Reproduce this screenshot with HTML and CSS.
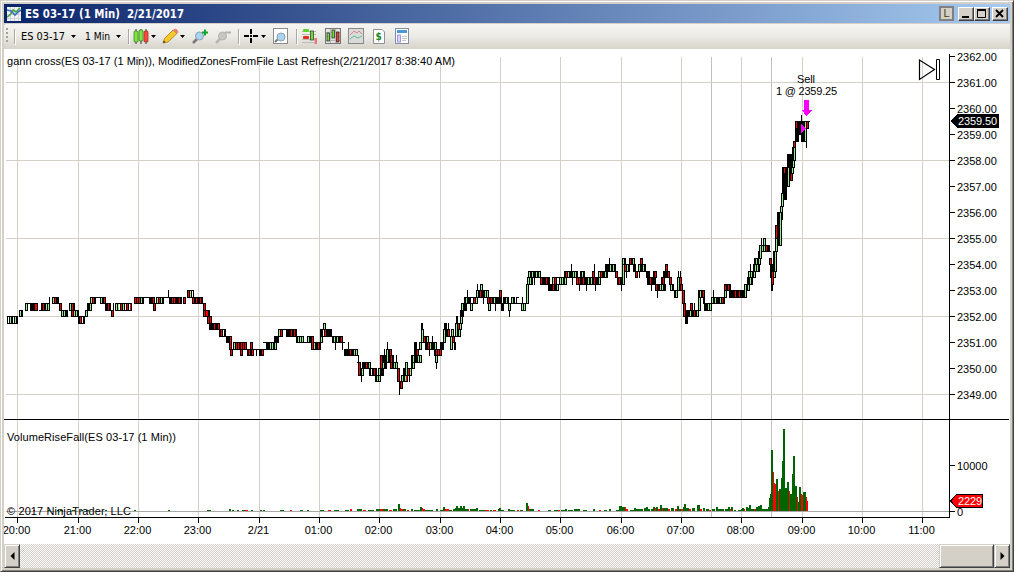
FILE: index.html
```html
<!DOCTYPE html>
<html lang="en">
<head>
    <meta charset="UTF-8">
    <title>ES 03-17 (1 Min) 2/21/2017</title>
    <link rel="stylesheet" href="styles.css">
</head>
<body>
<div class="window">
    <div class="titlebar">
        <svg class="app-icon" width="14" height="14" viewBox="0 0 14 14">
            <rect width="14" height="14" fill="#f0f2f4"/>
            <path d="M0 3.5H14M0 7.5H14M0 11.5H14M3.5 0V14M7.5 0V14M11.5 0V14" stroke="#ccd4dc"/>
            <path d="M0 10L3 8L6 3L9 5L13 1" fill="none" stroke="#4aa545" stroke-width="1.6"/>
            <path d="M0 3L4 4L8 8L11 5L14 3" fill="none" stroke="#3a6fb5" stroke-width="1.6"/>
        </svg>
        <svg class="title" width="200" height="19"><text x="0" y="14" textLength="159" lengthAdjust="spacingAndGlyphs">ES 03-17 (1 Min)&#160; 2/21/2017</text></svg>
        <div class="buttons">
            <span class="link-button">L</span>
            <span class="win-button"><svg width="12" height="11"><path d="M2 9H9" stroke="#000" stroke-width="2"/></svg></span>
            <span class="win-button"><svg width="12" height="11"><path d="M1.5 1V9.5H9.5V1" fill="none" stroke="#000"/><path d="M1 2H10" stroke="#000" stroke-width="2"/></svg></span>
            <span class="win-button close"><svg width="12" height="11"><path d="M2 2L9 9M9 2L2 9" stroke="#000" stroke-width="1.9"/></svg></span>
        </div>
    </div>

    <div class="toolbar">
        <svg width="1004" height="25" viewBox="4 24 1004 25">
            <g fill="#a5a297"><rect x="6" y="28" width="2" height="2"/><rect x="6" y="32" width="2" height="2"/><rect x="6" y="36" width="2" height="2"/><rect x="6" y="40" width="2" height="2"/></g>
            <path d="M14.5 29V44M128.5 29V44M238.5 29V44M296.5 29V44" stroke="#aaa79d"/>
            <path d="M15.5 30V45M129.5 30V45M239.5 30V45M297.5 30V45" stroke="#fff"/>
            <text x="21" y="40" textLength="44" lengthAdjust="spacingAndGlyphs">ES 03-17</text>
            <text x="85" y="40" textLength="25" lengthAdjust="spacingAndGlyphs">1 Min</text>
            <path d="M71 35h5l-2.5 3zM116 35h5l-2.5 3zM151 35h5l-2.5 3zM180 35h5l-2.5 3zM261 35h5l-2.5 3z" fill="#000"/>
            <!-- candle style -->
            <path d="M136 29V44M141 29V44M146 29V44" stroke="#333"/>
            <g stroke="#3c6e28" stroke-width=".7"><rect x="134" y="31" width="4" height="11" rx="1" fill="#7be83c"/><rect x="139" y="30" width="4" height="11" rx="1" fill="#7be83c"/><rect x="144" y="31" width="4" height="11" rx="1" fill="#fa4a3c" stroke="#8c2a22"/></g>
            <!-- pencil -->
            <path d="M163 43L164.500 38.500L173 30L177 33.500L168 42Z" fill="#f6c928" stroke="#a67720" stroke-width=".8"/>
            <path d="M173 30Q175.500 27.500 177.500 30T177 33.500Z" fill="#e8847a"/>
            <path d="M163 43L164 40.500L165.500 42.200Z" fill="#333"/>
            <!-- zoom in / out -->
            <path d="M193 43L197 39" stroke="#777" stroke-width="2.500"/>
            <circle cx="199.500" cy="36" r="4" fill="#a9d3ee" stroke="#8ca4b4"/>
            <path d="M202 32.500H208M205 29.500V35.500" stroke="#12a52b" stroke-width="2"/>
            <path d="M216 43L220 39" stroke="#b8b6b1" stroke-width="2.500"/>
            <circle cx="222.500" cy="36" r="4" fill="#c7c6c3" stroke="#b5b3ae"/>
            <path d="M225 32.500H231" stroke="#b5b3ae" stroke-width="2"/>
            <!-- crosshair -->
            <path d="M244 36H249M253 36H258M251 29V34M251 38V43" stroke="#000" stroke-width="2"/><rect x="250" y="35" width="2" height="2"/>
            <!-- data box -->
            <rect x="273.500" y="28.500" width="14" height="15" fill="#fff" stroke="#8c8c8c"/>
            <path d="M275 42L278 39" stroke="#777" stroke-width="2"/><circle cx="281" cy="37" r="4" fill="#a9d3ee" stroke="#8ca4b4"/>
            <!-- chart trader -->
            <path d="M302 31.500H316M302 34.500H316M302 39.500H316M302 42.500H314" stroke="#bbb"/>
            <rect x="303" y="29" width="6" height="3" rx="1" fill="#5bd52b"/><rect x="303" y="36" width="6" height="3" rx="1" fill="#e33022"/>
            <rect x="310.500" y="31" width="3" height="9" fill="#6fdc35" stroke="#333" stroke-width=".7"/><rect x="314.500" y="38" width="2.500" height="6" fill="#e77a78"/>
            <!-- data series -->
            <rect x="325.500" y="28.500" width="15" height="15" fill="#e4e4e2" stroke="#777"/>
            <path d="M326 32.500H340M326 36.500H340M326 40.500H340M330.500 29V43M335.500 29V43" stroke="#b5b5b5"/>
            <g stroke="#222" stroke-width=".7"><rect x="327" y="33" width="2.500" height="8" fill="#6fdc35"/><rect x="332" y="30" width="2.500" height="8" fill="#6fdc35"/><rect x="336.500" y="32" width="2.500" height="10" fill="#f03c2c"/></g>
            <!-- indicators -->
            <rect x="348.500" y="28.500" width="15" height="15" fill="#d8dadb" stroke="#888"/>
            <path d="M350 35L354 31L357 33L359 31L362 34" fill="none" stroke="#e58080"/><path d="M350 39L354 36L358 38L362 36" fill="none" stroke="#5cbf86"/>
            <!-- strategies -->
            <path d="M373.500 29.500H382L384.500 32V43.500H373.500Z" fill="#fff" stroke="#909090"/><text class="dollar" x="375.500" y="40">$</text>
            <!-- properties -->
            <rect x="395.500" y="28.500" width="13" height="15" fill="#fff" stroke="#8090a0"/><rect x="397" y="30" width="10" height="3" fill="#4a98d8"/><rect x="397.500" y="35" width="3" height="7" fill="#ddd3ff" stroke="#a294e8"/><path d="M402 36.500H407M402 38.500H407M402 40.500H406" stroke="#c4c4cc"/>
        </svg>
    </div>

    <svg id="chart" class="chart" width="1006" height="495" viewBox="4 49 1006 495" shape-rendering="crispEdges">
        <g id="grid"></g>
        <g id="volume"></g>
        <g id="candles"></g>
        <g id="axes"></g>
        <text x="7" y="65" textLength="448">gann cross(ES 03-17 (1 Min)), ModifiedZonesFromFile Last Refresh(2/21/2017 8:38:40 AM)</text>
        <text x="7" y="441" textLength="169">VolumeRiseFall(ES 03-17 (1 Min))</text>
        <text x="7" y="515" textLength="124">© 2017 NinjaTrader, LLC</text>
        <text x="797" y="83" textLength="18">Sell</text>
        <text x="776" y="95" textLength="61">1 @ 2359.25</text>
        <path d="M804 100h5v10h3l-5.500 6l-5 -6h2.500z" fill="#f0f"/>
        <path d="M801 124l5 4.500l-5 4.500z" fill="#f0f"/>
        <g fill="#fff" stroke="#000" shape-rendering="auto"><path d="M919.500 60V79.500L934.500 69.500Z" fill="none" stroke-width="1.200"/><path d="M936.500 59.500H939.500V79.500H936.500Z"/></g>
        <path d="M950 121l7 -7h42v14h-42z" fill="#000"/>
        <text class="light" x="958" y="125" textLength="39">2359.50</text>
        <path d="M950.500 501l6 -6.500h26v13h-26z" fill="#f00" stroke="#000"/>
        <text class="light" x="958" y="505" textLength="24">2229</text>
    </svg>

    <div class="scrollbar">
        <span class="scroll-button"><svg width="5" height="8"><path d="M4.500 0V8L.5 4Z"/></svg></span>
        <span class="track"></span>
        <span class="thumb"></span>
        <span class="scroll-button"><svg width="5" height="8"><path d="M.5 0V8L4.500 4Z"/></svg></span>
    </div>
</div>

<script>
    const NS = 'http://www.w3.org/2000/svg';
    const colors = { k: '#000', g: '#90ee90', r: '#f00', w: '#fff' };

    function rect(parent, x, y, w, h, fill) {
        const r = document.createElementNS(NS, 'rect');
        r.setAttribute('x', x);
        r.setAttribute('y', y);
        r.setAttribute('width', w);
        r.setAttribute('height', h);
        r.setAttribute('fill', fill);
        parent.appendChild(r);
    }

    function label(parent, x, y, text, anchor) {
        const t = document.createElementNS(NS, 'text');
        t.setAttribute('x', x);
        t.setAttribute('y', y);
        if (anchor) t.setAttribute('text-anchor', anchor);
        t.textContent = text;
        parent.appendChild(t);
    }

    // one level is a 0.25 tick, level 0 is 2352.00
    function levelY(n) {
        return 316 - Math.floor(n * 6.5);
    }

    const grid = document.getElementById('grid');
    const axes = document.getElementById('axes');
    const candles = document.getElementById('candles');
    const volume = document.getElementById('volume');

    // grid and axes
    const hours = [[17, '20:00'], [78, '21:00'], [138, '22:00'], [198, '23:00'], [259, '2/21'], [319, '01:00'], [379, '02:00'], [440, '03:00'],
        [500, '04:00'], [560, '05:00'], [621, '06:00'], [681, '07:00'], [741, '08:00'], [802, '09:00'], [862, '10:00'], [922, '11:00']];
    hours.forEach(([x, text]) => {
        rect(grid, x, 57, 1, 460, '#d4d0c8');
        rect(axes, x, 518, 1, 5, '#000');
        label(axes, x - 0.5, 534, text, 'middle');
    });
    rect(grid, 711, 57, 1, 460, '#c0c0c0');
    rect(grid, 771, 57, 1, 460, '#c0c0c0');
    [82, 160, 238, 316, 394].forEach(y => rect(grid, 6, y, 943, 1, '#d4d0c8'));
    rect(grid, 6, 511, 943, 1, '#a9a9a9');
    for (let p = 2349; p <= 2362; p++) {
        const y = 316 - (p - 2352) * 26;
        rect(axes, 950, y, 5, 1, '#000');
        label(axes, 957, y + 5, p + '.00');
    }
    rect(axes, 949, 54, 1, 464, '#000');
    rect(axes, 5, 517, 945, 1, '#000');
    rect(axes, 4, 419, 1005, 1, '#000');
    rect(axes, 950, 465, 5, 1, '#000');
    rect(axes, 950, 511, 5, 1, '#000');
    label(axes, 957, 470, '10000');
    label(axes, 957, 516, '0');

    // x, top level, bottom level, one letter per pixel column
    const bars = `7,0,-1,kwkgkkwkgkk 19,1,0,kgkk 25,2,1,kgk 28,2,2,kkk 30,2,1,kkkkkrrk 39,1,1,kkk 41,2,1,kkrkkgkgk 49,3,2,k 52,3,2,kgkrkkk
        59,2,1,krk 61,1,0,kgkgkkk 69,2,1,kgkrkk 71,1,0,krkgkgkk 78,0,-1,kkrkwkk 85,1,0,kgk 87,2,1,kkkgk 90,3,2,kgkrkk 96,3,3,kkkk 100,3,2,kgkkrk
        105,2,1,kkkrkk 111,1,0,krk 113,2,1,k 115,2,1,kgkgwkrkgkwkrkwrk 134,3,2,krkrkrkgkk 144,3,3,kkkkkk 149,3,2,kkkkrk 153,2,1,krk 156,3,2,kgkrkgkk
        164,3,3,kkkkkk 168,4,3,k 169,3,2,kkkrkrk 176,3,2,kkkrkk 183,3,2,krk 187,4,3,krkgkwk 192,3,2,krkkrkkkrkk 203,2,1,krk 203,1,0,krkrrkk
        207,0,-1,krkrk 209,-1,-2,kkkkkrkkkrk 219,-2,-3,kkrkwkk 226,-3,-4,kkkk 229,-3,-5,krk 230,-5,-6,krk 233,-4,-5,kgkrkrkkrkrkrk 240,-5,-6,krk
        250,-4,-5,krk 247,-5,-6,kkrkkrk 253,-5,-5,kkkkkk 256,-5,-6,k 259,-5,-6,kkkrk 263,-5,-5,kkkkkk 263,-4,-4,kkkk 266,-4,-5,kkkkgkgkkk
        274,-3,-5,kgk 275,-3,-4,kkkk 278,-2,-3,kgkrk 282,-2,-2,kkkk 286,-2,-3,kkkkkrkkrkk 296,-3,-4,kkgkgkgk 303,-4,-4,kkkkkk 307,-3,-4,kgkkkk
        311,-3,-5,krk 313,-4,-5,kgkkkrkk 320,-2,-4,kgk 323,-1,-2,kgk 320,-2,-3,kkkwkrkkkkkk 332,-3,-4,kkgkkgkkkrk 335,-4,-5,k 342,-4,-4,kkk 342,-4,-5,k
        344,-5,-6,kkkkkkrkkkgkgk 348,-4,-5,k 358,-6,-7,k 357,-7,-7,kk 358,-7,-9,krk 361,-8,-10,k 361,-8,-9,kgk 362,-7,-8,kkkkrkkgk 369,-8,-9,kkwkkrkk
        375,-9,-10,kkgkgk 378,-8,-9,kgkkkk 380,-6,-8,krk 384,-5,-6,k 382,-6,-7,kkkkkk 382,-7,-8,kgkkk 387,-4,-5,k 386,-5,-7,kgk 388,-5,-6,kkrk 389,-6,-7,kkrkk
        390,-7,-8,krkkgkgk 396,-6,-7,k 397,-8,-10,krk 399,-8,-12,k 400,-10,-11,krk 401,-9,-10,kgkkgrk 403,-8,-9,kkkk 405,-7,-9,kgk 407,-8,-9,krkgk
        409,-9,-10,k 411,-6,-8,kkgk 414,-4,-6,kkk 412,-6,-7,kgkkkkgkgk 415,-5,-6,kkrk 419,-4,-5,kgk 421,-2,-4,kgk 421,-1,-2,kk 423,-3,-4,krkkgk
        425,-4,-5,kkkrkgkkkkgk 432,-3,-4,k 429,-5,-6,k 434,-5,-6,kkrkrkrk 435,-6,-7,kgk 436,-7,-8,k 440,-4,-5,kkkk 443,-2,-4,kgk 444,-1,-2,kkk
        446,-2,-3,kkrk 448,-1,-2,k 450,-3,-5,kgk 451,-2,-3,kgk 452,-3,-4,krk 454,-4,-5,kk 455,-1,-3,kgk 456,0,-1,kk 457,-1,-2,krk 458,-2,-3,kgk 459,-1,-2,kgk
        460,1,-1,kgk 461,2,1,kgkkkk 461,1,0,kkk 464,3,2,kkgkkkk 467,4,3,k 470,2,1,kgk 470,3,3,kkkkk 473,3,2,krkgk 476,4,3,kgk 477,5,4,k 480,5,4,kgk 478,4,3,kkrkkkkgkgk
        487,3,2,krkkrk 488,2,1,kgk 483,3,2,k 493,3,2,kgkkkkkkk 495,2,1,k 499,4,3,krk 501,2,1,kkk 503,3,2,kkkgkk 508,2,1,kgk 509,1,0,k 511,3,2,kgkk
        516,3,2,k 516,3,3,kkk 512,2,2,kkkkkkkkkkkk 521,2,1,kgkgk 522,3,2,k 526,5,2,kgk 527,6,5,kgkgkk 528,7,6,kgkkgkkkgkkgk 534,6,5,k
        540,6,5,krkkkkrkkk 548,5,4,kkkkkrkkkgk 552,6,5,kgkrk 557,6,6,kkk 559,6,5,kgkgkkgk 564,7,6,kkrk 567,7,6,kgkkkkgkgkk 571,8,7,k 572,6,5,k
        576,6,5,krkrkkkrkk 580,7,6,kkgkk 579,5,4,k 586,5,4,k 585,6,5,kkkgkkgkkrkkkk 592,7,6,krk 594,8,7,k 595,5,4,k 598,7,6,kgkrkkkgkk 598,6,5,kgk
        605,8,7,kkkkkgkkgkk 609,9,8,k 615,7,6,krk 617,6,5,kkrkk 621,5,4,k 622,8,5,kgk 622,9,8,kgkk 624,8,7,krkgkk 626,7,6,k 629,9,8,krkkgk
        628,8,8,kkkkkk 633,8,7,kkk 635,7,6,krk 638,8,7,kgkkkgkk 640,9,8,krk 639,7,6,k 645,8,7,k 646,7,6,kkkk 647,6,5,kkkrkkkkk 653,7,6,kkrk
        655,5,4,krkkkgkgkkk 657,4,3,k 651,5,4,k 661,6,5,kkrk 663,7,6,kkk 665,8,7,krk 666,7,6,kkrk 669,6,5,krk 670,5,4,kgkk 674,4,3,kkgk
        677,6,4,kgk 679,6,5,krk 680,5,4,krk 678,7,6,k 680,7,6,k 682,4,2,krk 683,2,0,krk 685,1,0,kkkkkgkkkrkkgk 685,0,-1,kkk 690,2,1,krk 694,2,1,k
        698,3,1,kgk 698,4,3,kkgkrk 702,4,3,krk 703,3,2,kk 704,2,1,kkkkgkgk 711,3,2,kgkkgkkkkgkrkk 713,4,3,k 724,5,3,kgk 724,5,4,krkkrkk
        729,4,3,kkkkkkrkkkrkkkkgk 744,5,3,kgk 746,5,4,kkgk 747,6,5,kkkgkk 748,7,6,kgkgkk 750,8,7,k 753,8,6,kgk 754,8,7,kgkgkk 754,9,8,kkgkk
        758,10,8,kgk 759,11,9,kgk 761,11,10,kgkgkrkkk 761,12,11,k 763,12,11,kgk 767,10,10,kkkk 769,9,8,krk 770,8,6,kkk 771,6,4,kk 771,7,5,krk
        773,8,6,kgk 773,10,7,kkgk 775,12,10,kgk 775,14,12,krk 777,14,11,kkgk 777,16,13,kkkk 780,17,15,kgk 779,16,11,kgk 781,19,17,kgk 782,21,19,kkkk 782,23,21,kkrk
        784,22,18,kkk 786,18,18,k 785,23,20,kkk 787,23,20,kgk 787,25,23,kkrk 789,25,22,kkk 790,22,21,krk 791,24,22,kgk 792,26,23,kgk 793,27,24,kgk
        793,27,26,krk 795,30,27,kkkk 795,30,29,krk 797,30,28,kkkkk 798,29,28,krk 801,31,27,k 799,30,28,kkkkk 801,30,27,kkkk 803,29,27,kkk 804,30,27,kgk
        806,30,29,krk 805,30,30,kkkkk 806,27,26,k`;
    bars.trim().split(/\s+/).forEach(bar => {
        const [x, top, bottom, columns] = bar.split(',');
        const y = levelY(+top);
        const h = levelY(+bottom) - y + 1;
        rect(candles, +x, y, columns.length, h, '#000');
        [...columns].forEach((c, i) => {
            if (c !== 'k' && h > 2) rect(candles, +x + i, y + 1, 1, h - 2, colors[c]);
        });
    });

    // volume: x, width, height, g or r
    const volumes = `33,2,1,r 48,2,1,g 57,2,1,g 60,3,1,g 72,3,1,g 81,2,1,g 86,3,1,g 105,2,1,g 134,2,1,g 168,2,1,g 207,4,1,g 229,2,2,g 232,2,1,g 237,2,1,g 242,3,1,g
        245,3,1,r 251,2,1,g 260,2,1,g 263,2,1,g 280,4,1,g 290,2,1,r 300,3,1,g 307,2,1,g 320,4,1,g 328,3,1,r 334,5,1,g 345,4,1,g 350,2,2,r 357,5,2,g 363,3,1,r 368,6,1,g
        376,4,2,g 380,3,2,r 383,5,2,g 389,3,1,r 393,4,2,g 398,2,7,g 400,1,3,r 401,2,2,r 403,3,2,g 407,2,1,r 411,2,2,g 414,6,1,g 420,2,4,g 422,1,3,r 423,2,2,r 425,8,1,g
        436,2,2,g 440,3,1,g 443,2,4,g 445,4,2,r 449,3,1,g 453,3,2,g 455,2,3,g 456,2,5,g 458,2,3,g 460,2,5,g 462,2,3,g 463,2,5,g 465,3,2,g 468,1,2,r 470,6,2,g 476,2,3,g
        479,6,1,g 485,4,1,r 490,2,1,g 493,3,1,r 498,1,2,g 499,2,3,g 501,3,1,g 508,2,2,g 510,5,1,g 517,2,1,r 520,3,1,g 526,2,8,g 528,1,5,r 529,3,2,g 532,2,2,g 538,2,1,r
        548,3,1,g 554,5,1,g 558,2,1,r 561,4,1,g 565,2,2,g 568,5,1,g 574,6,2,g 583,4,1,g 593,2,2,g 599,2,1,r 604,3,1,g 609,2,2,g 616,3,1,g 619,2,5,g 621,1,5,g 622,3,4,g 625,1,4,r
        626,2,2,r 630,4,1,g 634,2,3,g 636,4,2,g 640,3,2,g 644,2,3,g 646,2,4,g 648,2,2,g 651,2,2,g 653,2,4,g 655,1,3,r 656,2,4,g 658,2,2,r 660,2,6,g 662,1,3,r 663,5,3,g
        668,2,2,r 671,3,3,g 675,2,2,r 677,2,5,g 679,2,2,g 681,2,2,r 683,1,4,g 684,2,7,g 686,3,3,g 689,2,2,r 692,3,3,g 697,3,6,g 700,2,2,r 703,2,3,g 706,3,2,g 709,2,1,r
        712,3,2,g 716,2,4,g 718,2,2,g 720,4,2,g 725,3,2,g 728,2,4,g 730,1,2,r 731,2,4,g 734,2,1,g 738,3,1,g 741,1,2,g 742,2,3,g 744,1,2,r 746,2,4,g 748,1,3,g 749,2,6,g
        751,3,2,g 754,1,2,r 755,1,2,g 756,2,4,g 758,2,5,g 760,2,6,g 762,6,2,g 768,1,4,g 769,1,13,g 770,1,17,g 771,2,61,g 773,1,39,r 774,1,28,r 775,1,27,r 776,2,32,g 778,1,20,r
        779,2,22,g 781,1,33,g 782,1,50,g 783,2,82,g 785,2,23,g 787,2,29,g 789,1,20,r 790,2,17,g 792,1,37,g 793,2,55,g 795,2,25,g 797,1,14,r 798,1,9,g 799,2,24,g 801,1,17,r
        802,1,16,r 803,3,19,g 806,1,14,r 807,1,10,r`;
    volumes.trim().split(/\s+/).forEach(v => {
        const [x, w, h, c] = v.split(',');
        rect(volume, +x, 511 - h, +w, +h, c === 'g' ? '#006400' : '#f00');
    });
</script>
</body>
</html>
```
FILE: styles.css
```css
body {
    margin: 0;
    overflow: hidden;
    font-family: "Liberation Sans", Arial, sans-serif;
    font-size: 11px;
}
.window {
    display: flex;
    flex-direction: column;
    box-sizing: border-box;
    width: 1014px;
    height: 572px;
    padding: 3px;
    border: 1px solid #d4d0c8;
    border-right-color: #404040;
    border-bottom-color: #404040;
    background: #d4d0c8;
    box-shadow: inset 1px 1px #fff, inset -1px -1px #808080;
}
.titlebar {
    display: flex;
    align-items: center;
    height: 19px;
    flex: none;
    padding-left: 3px;
    padding-right: 2px;
    background: linear-gradient(to right, #0a246a, #a6caf0);
}
.title {
    margin-left: 4px;
    overflow: visible;
}
.title text {
    font-family: "DejaVu Sans Condensed", "DejaVu Sans", sans-serif;
    font-size: 11.5px;
    font-weight: bold;
    fill: #fff;
}
.buttons {
    display: flex;
    align-items: center;
    margin-left: auto;
}
.link-button {
    box-sizing: border-box;
    width: 15px;
    height: 15px;
    margin-right: 4px;
    border: 2px solid #808080;
    background: #d4d0c8;
    color: #4a3c14;
    line-height: 11px;
    text-align: center;
}
.win-button {
    display: flex;
    align-items: center;
    justify-content: center;
    box-sizing: border-box;
    width: 16px;
    height: 14px;
    border: 1px solid #fff;
    border-right-color: #404040;
    border-bottom-color: #404040;
    background: #d4d0c8;
    box-shadow: inset -1px -1px #808080;
}
.close {
    margin-left: 2px;
}
.toolbar {
    flex: none;
    height: 25px;
    margin-top: 1px;
    border-radius: 3px 0 2px 3px;
    background: linear-gradient(#f6f5f2, #ebeae5 50%, #d6d3ca);
}
.toolbar svg {
    display: block;
}
.toolbar text {
    font-family: "DejaVu Sans Condensed", "DejaVu Sans", sans-serif;
    font-size: 11px;
}
.toolbar .dollar {
    fill: #238b2b;
    font-size: 10px;
    font-weight: bold;
}
.chart {
    display: block;
    flex: none;
    background: #fff;
}
.chart text {
    font-size: 11px;
}
.chart .light {
    fill: #fff;
}
.scrollbar {
    display: flex;
    flex: none;
    height: 24px;
}
.scroll-button,
.thumb {
    display: flex;
    align-items: center;
    justify-content: center;
    box-sizing: border-box;
    width: 16px;
    border: 1px solid #d4d0c8;
    border-right-color: #404040;
    border-bottom-color: #404040;
    background: #d4d0c8;
    box-shadow: inset 1px 1px #fff, inset -1px -1px #808080;
}
.thumb {
    width: 55px;
}
.track {
    flex: 1;
    background: repeating-conic-gradient(#d4d0c8 0% 25%, #fff 0% 50%) 0 0 / 2px 2px;
}
```
